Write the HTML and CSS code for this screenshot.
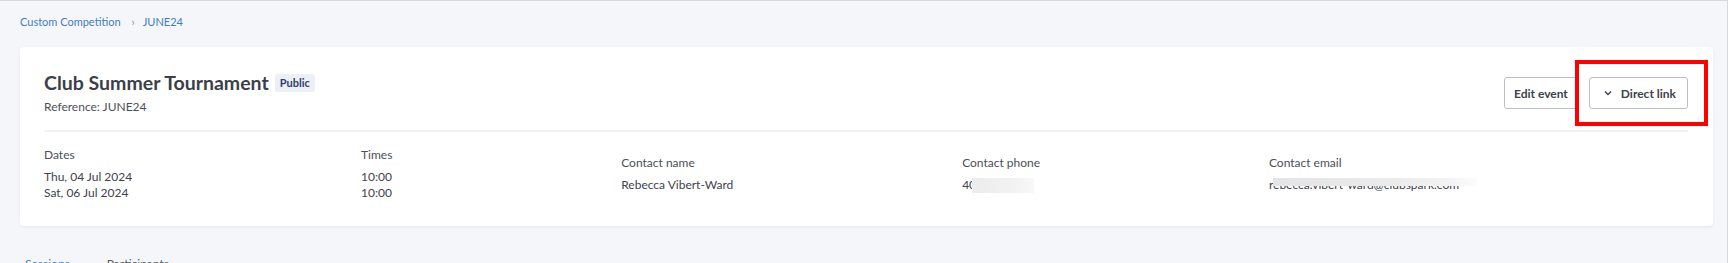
FILE: index.html
```html
<!DOCTYPE html>
<html lang="en">
<head>
  <meta charset="UTF-8">
  <meta name="viewport" content="width=device-width, initial-scale=1.0">
  <title>Club Summer Tournament</title>
  <link rel="stylesheet" href="styles.css">
</head>
<body>
  <div class="pagina">
    <nav class="migalhas">
      <a href="#">Custom Competition</a>
      <span class="seta">›</span>
      <a href="#">JUNE24</a>
    </nav>

    <section class="cartao">
      <div class="cabecalho">
        <div class="titulo-bloco">
          <div class="titulo-linha">
            <h1>Club Summer Tournament</h1>
            <span class="selo">Public</span>
          </div>
          <div class="referencia">Reference: JUNE24</div>
        </div>

        <div class="acoes">
          <button class="botao">Edit event</button>
          <div class="destaque-wrap">
            <button class="botao">
              <svg class="chevron" viewBox="0 0 10 10"><path d="M2 3.5 L5 6.5 L8 3.5" /></svg>
              Direct link
            </button>
            <div class="destaque"></div>
          </div>
        </div>
      </div>

      <div class="divisor"></div>

      <div class="detalhes">
        <div class="coluna">
          <div class="rotulo">Dates</div>
          <div class="valor">Thu, 04 Jul 2024</div>
          <div class="valor">Sat, 06 Jul 2024</div>
        </div>
        <div class="coluna">
          <div class="rotulo">Times</div>
          <div class="valor">10:00</div>
          <div class="valor">10:00</div>
        </div>
        <div class="coluna">
          <div class="rotulo">Contact name</div>
          <div class="valor">Rebecca Vibert-Ward</div>
        </div>
        <div class="coluna">
          <div class="rotulo">Contact phone</div>
          <div class="valor oculto">40<span class="borrao borrao-fone"></span></div>
        </div>
        <div class="coluna">
          <div class="rotulo">Contact email</div>
          <div class="valor oculto">rebecca.vibert-ward@clubspark.com<span class="borrao borrao-email"></span></div>
        </div>
      </div>
    </section>

    <div class="abas">
      <a href="#" class="aba ativa">Sessions</a>
      <a href="#" class="aba">Participants</a>
    </div>
  </div>
</body>
</html>
```

FILE: styles.css
```css
* {
  box-sizing: border-box;
}

html,
body {
  margin: 0;
  height: 100%;
}

body {
  font-family: Lato, 'Open Sans', sans-serif;
  font-size: 12px;
  line-height: 16px;
  color: #3d424d;
  background: #f5f6f9;
  border-top: 1px solid #d6d9e0;
  border-right: 1px solid #d6d9e0;
  overflow: hidden;
}

.pagina {
  padding: 0 14px 0 20px;
}

.migalhas {
  padding-top: 13px;
  display: flex;
  align-items: center;
  font-size: 11px;
}

.migalhas a {
  color: #3f7fc0;
  text-decoration: none;
}

.seta {
  color: #8a909b;
  margin: 0 8px 0 11px;
}

.cartao {
  margin-top: 17px;
  background: #fff;
  border-radius: 4px;
  box-shadow: 0 1px 3px rgba(30, 40, 60, 0.07);
  padding: 24px 25px 25px 24px;
}

.cabecalho {
  display: flex;
  justify-content: space-between;
  align-items: center;
}

.titulo-linha {
  display: flex;
  align-items: center;
  gap: 6px;
}

h1 {
  margin: 0;
  font-size: 19.5px;
  line-height: 24px;
  font-weight: 700;
  color: #3a3f49;
}

.selo {
  background: #eceff5;
  color: #2f3e6b;
  font-size: 11px;
  font-weight: 700;
  line-height: 14px;
  padding: 2px 5px;
  border-radius: 3px;
}

.referencia {
  margin-top: 4px;
  color: #4a4f59;
}

.acoes {
  display: flex;
  align-items: center;
  gap: 11px;
}

.botao {
  font-family: inherit;
  font-size: 12px;
  font-weight: 700;
  color: #3d424d;
  background: #fff;
  border: 1px solid #b9bec8;
  border-radius: 3px;
  height: 32px;
  padding: 0 9px;
  display: flex;
  align-items: center;
  cursor: pointer;
}

.destaque-wrap {
  position: relative;
}

.destaque-wrap .botao {
  padding: 0 11px 0 13px;
}

.chevron {
  width: 10px;
  height: 10px;
  margin-right: 8px;
  fill: none;
  stroke: #3d424d;
  stroke-width: 1.4;
}

.destaque {
  position: absolute;
  top: -17px;
  right: -20px;
  bottom: -17px;
  left: -14px;
  border: 4px solid #ff0000;
  pointer-events: none;
}

.divisor {
  margin-top: 15px;
  border-top: 2px solid #f0f1f4;
}

.detalhes {
  display: flex;
  align-items: center;
  padding-top: 15px;
}

.coluna {
  flex: 1 1 auto;
}

.rotulo {
  margin-bottom: 6px;
  color: #4a4f59;
}

.oculto {
  position: relative;
}

.borrao {
  position: absolute;
  filter: blur(0.6px);
}

.borrao-fone {
  left: 10px;
  top: 1px;
  width: 62px;
  height: 15px;
  background: linear-gradient(90deg, #ececec, #f1f1f1 60%, #f8f8f8);
}

.borrao-email {
  left: 4px;
  top: 1px;
  width: 205px;
  height: 8px;
  background: linear-gradient(90deg, #e4e4e4, #ebebeb 60%, #f4f4f4 88%, #fdfdfd);
}

.abas {
  margin-top: 30px;
  display: flex;
  gap: 37px;
  padding-left: 5px;
}

.aba {
  color: #555b66;
  text-decoration: none;
  font-size: 12px;
}

.aba.ativa {
  color: #3f7fc0;
}
```
